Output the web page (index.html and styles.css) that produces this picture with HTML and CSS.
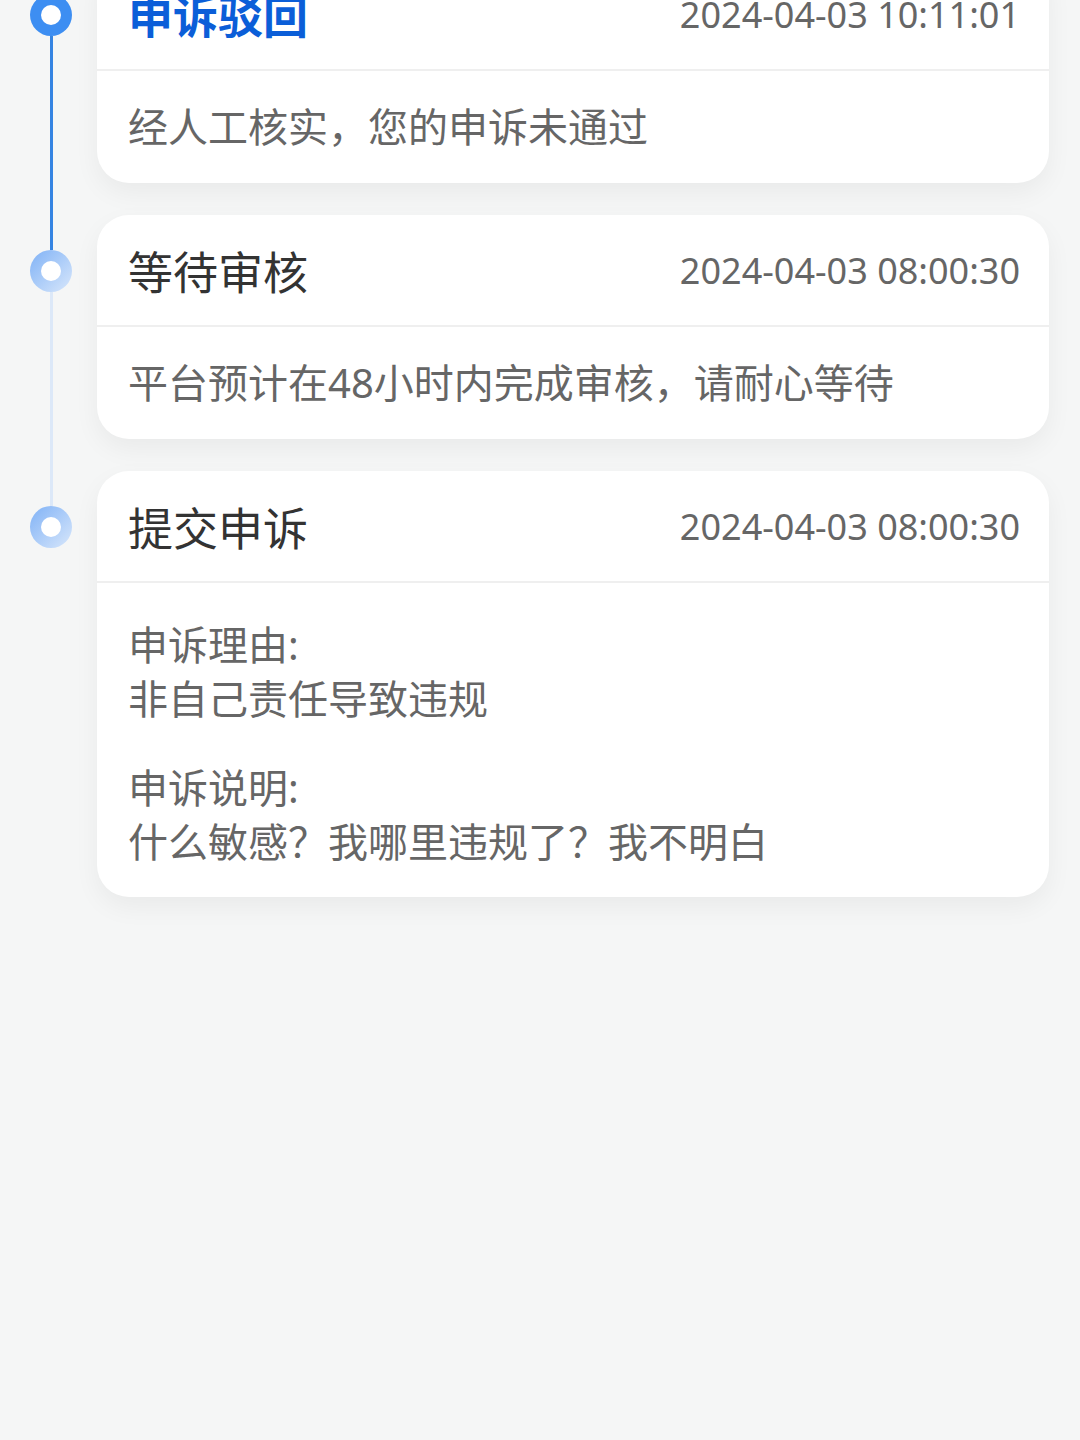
FILE: index.html
```html
<!DOCTYPE html>
<html lang="zh-CN">
  <head>
    <meta charset="UTF-8" />
    <meta name="viewport" content="width=device-width, initial-scale=1.0" />
    <title>申诉进度</title>
    <link rel="stylesheet" href="styles.css">
  </head>
  <body>
    <div class="timeline">
      <div class="step done">
        <div class="rail">
          <div class="rail-in"></div>
          <div class="dot"></div>
          <div class="rail-out"></div>
        </div>
        <div class="card">
          <div class="card-head">
            <span class="step-title">申诉驳回</span>
            <span class="step-time">2024-04-03 10:11:01</span>
          </div>
          <div class="card-body">经人工核实，您的申诉未通过</div>
        </div>
      </div>

      <div class="step">
        <div class="rail">
          <div class="rail-in"></div>
          <div class="dot"></div>
          <div class="rail-out"></div>
        </div>
        <div class="card">
          <div class="card-head">
            <span class="step-title">等待审核</span>
            <span class="step-time">2024-04-03 08:00:30</span>
          </div>
          <div class="card-body">平台预计在48小时内完成审核，请耐心等待</div>
        </div>
      </div>

      <div class="step last">
        <div class="rail">
          <div class="rail-in"></div>
          <div class="dot"></div>
          <div class="rail-out"></div>
        </div>
        <div class="card">
          <div class="card-head">
            <span class="step-title">提交申诉</span>
            <span class="step-time">2024-04-03 08:00:30</span>
          </div>
          <div class="card-body detail">
            <div class="field">
              <div>申诉理由:</div>
              <div>非自己责任导致违规</div>
            </div>
            <div class="field">
              <div>申诉说明:</div>
              <div>什么敏感？我哪里违规了？我不明白</div>
            </div>
          </div>
        </div>
      </div>
    </div>
  </body>
</html>
```

FILE: styles.css
```css
body {
  margin: 0;
  background-color: #f5f6f6;
  font-family: "Noto Sans", "Noto Sans CJK SC", sans-serif;
  width: 1080px;
  height: 1440px;
  overflow: hidden;
}
.timeline {
  margin-top: -41px;
  padding-right: 31px;
}
.step {
  display: flex;
}
.rail {
  width: 97px;
  flex-shrink: 0;
  display: flex;
  flex-direction: column;
  align-items: center;
  padding-left: 5px;
  box-sizing: border-box;
}
.rail-in {
  height: 35px;
  width: 3px;
  background: #dce8f8;
}
.rail-out {
  flex: 1;
  width: 3px;
  background: #dce8f8;
}
.done .rail-in,
.done .rail-out,
.done + .step .rail-in {
  background: #3584e2;
}
.last .rail-out {
  background: transparent;
}
.dot {
  width: 42px;
  height: 42px;
  border-radius: 50%;
  flex-shrink: 0;
  background: linear-gradient(135deg, #80b2f6, #d8e7fb);
  display: flex;
  align-items: center;
  justify-content: center;
}
.dot::after {
  content: "";
  width: 20px;
  height: 20px;
  border-radius: 50%;
  background: #fff;
}
.done .dot {
  background: #3d8ef2;
}
.card {
  flex: 1;
  margin-bottom: 32px;
  background: #fff;
  border-radius: 32px;
  box-shadow: 0 10px 26px rgba(0, 0, 0, 0.05);
}
.card-head {
  height: 112px;
  display: flex;
  align-items: center;
  justify-content: space-between;
  padding: 0 29px 0 31px;
  border-bottom: 2px solid #efefef;
  box-sizing: border-box;
}
.step-title {
  font-size: 45px;
  color: #333;
}
.done .step-title {
  color: #0b5ed8;
  font-weight: bold;
}
.step-time {
  font-size: 36px;
  color: #666;
}
.card-body {
  padding: 29px 30px 29px 31px;
  font-size: 40px;
  line-height: 54px;
  color: #666;
}
.card-body.detail {
  padding-top: 35px;
  padding-bottom: 28px;
  display: flex;
  flex-direction: column;
  gap: 35px;
}
```
